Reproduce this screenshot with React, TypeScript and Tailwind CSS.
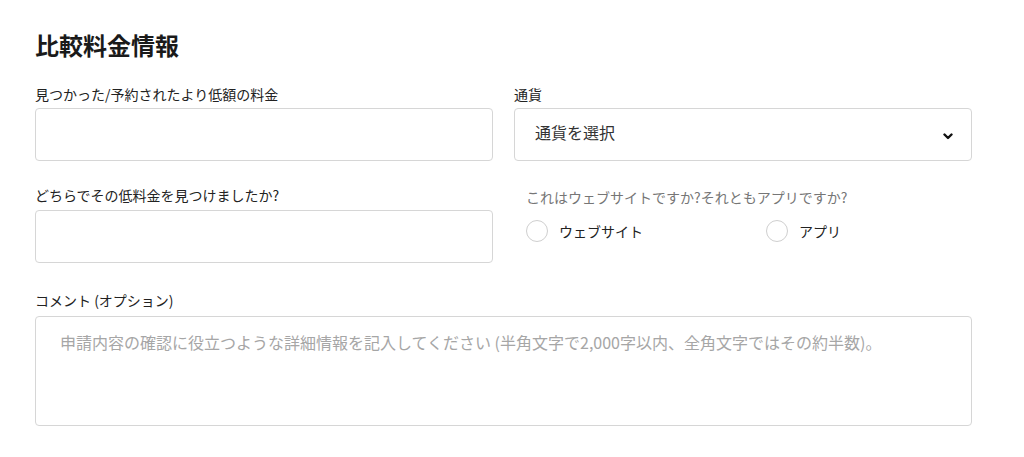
import React from "react";

export default function App() {
  const font = {
    fontFamily: '"Noto Sans CJK JP", "Noto Sans", sans-serif',
  };

  return (
    <div
      className="min-h-[457px] w-full bg-white pl-[35px] pt-[29px] text-[#222]"
      style={font}
    >
      <div className="w-[937px]">
        {/* Title */}
        <h1 className="text-[24px] font-bold leading-8 text-[#1a1a1a]">
          比較料金情報
        </h1>

        <div className="mt-[23px] grid grid-cols-2 gap-x-[21px]">
          {/* Lower fare */}
          <div>
            <label className="mb-1 block text-sm leading-5">
              見つかった/予約されたより低額の料金
            </label>
            <input
              type="text"
              className="h-[53px] w-full rounded border border-[#d6d6d6] px-5 outline-none"
            />
          </div>

          {/* Currency */}
          <div>
            <label className="mb-1 block text-sm leading-5">通貨</label>
            <div className="flex h-[53px] w-full items-start justify-between rounded border border-[#d6d6d6] pl-5 pr-[18px] pt-[11px]">
              <span className="text-base leading-6 text-[#333]">通貨を選択</span>
              <svg
                width="10"
                height="7"
                viewBox="0 0 10 7"
                className="mt-[13px]"
              >
                <polyline
                  points="1.5,1.5 5,5 8.5,1.5"
                  fill="none"
                  stroke="#111"
                  strokeWidth="2.4"
                  strokeLinecap="round"
                  strokeLinejoin="round"
                />
              </svg>
            </div>
          </div>

          {/* Where found */}
          <div className="mt-6">
            <label className="mb-[5px] block text-sm leading-5">
              どちらでその低料金を見つけましたか?
            </label>
            <input
              type="text"
              className="h-[53px] w-full rounded border border-[#d6d6d6] px-5 outline-none"
            />
          </div>

          {/* Website or app */}
          <div className="mt-[26px] pl-3">
            <p className="text-sm leading-5 text-[#767676]">
              これはウェブサイトですか?それともアプリですか?
            </p>
            <div className="mt-[13px] flex">
              {["ウェブサイト", "アプリ"].map((opt) => (
                <label
                  key={opt}
                  className="flex w-[240px] shrink-0 items-center gap-[11px] text-sm leading-5"
                >
                  <span className="h-[22px] w-[22px] rounded-full border border-[#cfcfcf] bg-white" />
                  {opt}
                </label>
              ))}
            </div>
          </div>
        </div>

        {/* Comment */}
        <div className="mt-[27px]">
          <label className="mb-[6px] block text-sm leading-5">
            コメント (オプション)
          </label>
          <textarea
            className="h-[110px] w-full resize-none rounded border border-[#d6d6d6] px-6 pt-[13px] text-base leading-6 outline-none placeholder:text-[#a6a6a6]"
            placeholder="申請内容の確認に役立つような詳細情報を記入してください (半角文字で2,000字以内、全角文字ではその約半数)。"
          />
        </div>
      </div>
    </div>
  );
}
